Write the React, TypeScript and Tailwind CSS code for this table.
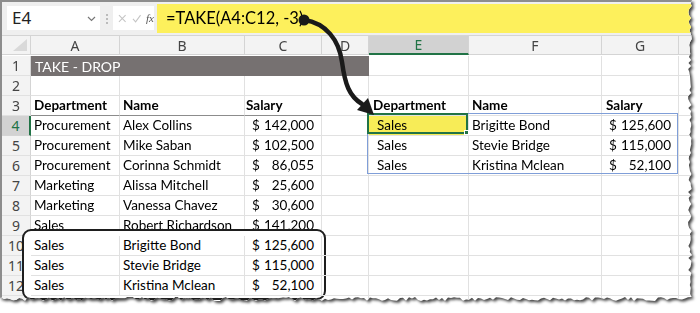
import React from "react";

const COLS = [29, 89, 125, 77, 47, 100, 133, 77];

type Row = {
  a?: string;
  b?: string;
  c?: string;
  e?: string;
  f?: string;
  g?: string;
  bold?: boolean;
};

const rows: Row[] = [
  {},
  {},
  { a: "Department", b: "Name", c: "Salary", e: "Department", f: "Name", g: "Salary", bold: true },
  { a: "Procurement", b: "Alex Collins", c: "142,000", e: "Sales", f: "Brigitte Bond", g: "125,600" },
  { a: "Procurement", b: "Mike Saban", c: "102,500", e: "Sales", f: "Stevie Bridge", g: "115,000" },
  { a: "Procurement", b: "Corinna Schmidt", c: "86,055", e: "Sales", f: "Kristina Mclean", g: "52,100" },
  { a: "Marketing", b: "Alissa Mitchell", c: "25,600" },
  { a: "Marketing", b: "Vanessa Chavez", c: "30,600" },
  { a: "Sales", b: "Robert Richardson", c: "141,200" },
  { a: "Sales", b: "Brigitte Bond", c: "125,600" },
  { a: "Sales", b: "Stevie Bridge", c: "115,000" },
  { a: "Sales", b: "Kristina Mclean", c: "52,100" },
  {},
];

// jagged "torn paper" outline for the screenshot edge
function tornEdge() {
  let s = 11;
  const rand = () => {
    s = (s * 9301 + 49297) % 233280;
    return s / 233280;
  };
  const pts: string[] = ["0px 0px", "692px 0px"];
  for (let y = 3; y <= 297; y += 3) pts.push(`${(688 + rand() * 4).toFixed(1)}px ${y}px`);
  for (let x = 688; x >= 0; x -= 3) pts.push(`${x}px ${(297 + rand() * 4).toFixed(1)}px`);
  pts.push("0px 299px");
  return `polygon(${pts.join(",")})`;
}

const cellFont = { fontFamily: "Lato, 'Open Sans', sans-serif" };

function Money({ v, bold }: { v?: string; bold?: boolean }) {
  if (!v) return null;
  if (bold) return <span className="pl-[1px]">{v}</span>;
  return (
    <span className="flex w-full justify-between pl-[7px] pr-[7px]">
      <span>$</span>
      <span>{v}</span>
    </span>
  );
}

function Sheet() {
  const template = `${COLS.map((c) => c + "px").join(" ")} 1fr`;
  return (
    <div
      className="grid text-[13.5px] text-black"
      style={{ gridTemplateColumns: template, gridAutoRows: "20px", ...cellFont }}
    >
      {/* column header row */}
      <div className="relative h-[19px] border-b border-r border-[#d4d4d4] bg-[#f3f3f3]">
        <div className="absolute bottom-[3px] right-[3px] h-0 w-0 border-b-[12px] border-l-[14px] border-b-[#d9d9d9] border-l-transparent" />
      </div>
      {["A", "B", "C", "D", "E", "F", "G", ""].map((l) => (
        <div
          key={l || "h"}
          className={
            l === "E"
              ? "flex h-[19px] items-center justify-center border-b-2 border-r border-b-[#217346] border-r-[#d4d4d4] bg-[#d2d2d2] text-[14px] text-[#217346]"
              : "flex h-[19px] items-center justify-center border-b border-r border-[#d4d4d4] bg-[#f3f3f3] text-[14px] text-[#444]"
          }
          style={{ fontFamily: "'Noto Sans', sans-serif" }}
        >
          {l}
        </div>
      ))}

      {rows.map((r, i) => {
        const n = i + 1;
        const boxed = n >= 10 && n <= 12;
        const z = boxed ? "relative z-20" : "";
        const cell = `flex items-center overflow-hidden whitespace-nowrap border-b border-r border-[#e1e1e1] ${z}`;
        const hdrCell = r.bold ? "border-b-[#8c8c8c]" : "";
        const spill = n >= 4 && n <= 6;
        return (
          <React.Fragment key={n}>
            <div
              className={
                n === 4
                  ? "flex items-center justify-center border-b border-r-2 border-b-[#d4d4d4] border-r-[#217346] bg-[#d2d2d2] text-[14px] text-[#217346]"
                  : "flex items-center justify-center border-b border-r border-b-[#e1e1e1] border-r-[#d4d4d4] bg-[#f3f3f3] text-[14px] text-[#444]"
              }
              style={{ fontFamily: "'Noto Sans', sans-serif" }}
            >
              {n}
            </div>
            {n === 1 ? (
              <div className="col-span-4 flex items-center bg-[#767171] pl-1 text-[14px] text-white">TAKE - DROP</div>
            ) : (
              <>
                <div className={`${cell} ${hdrCell} pl-[3px] ${r.bold ? "font-bold" : ""}`}>{r.a}</div>
                <div className={`${cell} ${hdrCell} pl-[3px] ${r.bold ? "font-bold" : ""}`}>{r.b}</div>
                <div className={`${cell} ${hdrCell} ${r.bold ? "font-bold" : ""}`}>
                  <Money v={r.c} bold={r.bold} />
                </div>
                <div className={cell} />
              </>
            )}
            <div
              className={`${cell} ${spill ? "pl-[8px]" : "pl-[4px]"} ${r.bold ? "font-bold" : ""} ${
                n === 4 ? "bg-[#f7ec57]" : ""
              }`}
            >
              {r.e}
            </div>
            <div className={`${cell} pl-[3px] ${r.bold ? "font-bold" : ""}`}>{r.f}</div>
            <div className={`${cell} ${r.bold ? "font-bold pl-[3px]" : "pr-[0px]"}`}>
              <Money v={r.g} bold={r.bold} />
            </div>
            <div className={cell} />
          </React.Fragment>
        );
      })}
    </div>
  );
}

function FormulaBar() {
  return (
    <div className="flex h-[34px] items-stretch border-b border-[#d4d4d4] bg-[#efefef] pt-[2px] pb-[2px]">
      <div
        className="ml-[5px] mt-[2px] mb-[3px] flex w-[93px] items-center justify-between bg-white pl-[5px] pr-[4px] text-[17px] text-[#222]"
        style={{ fontFamily: "'Noto Sans', sans-serif" }}
      >
        <span>E4</span>
        <svg width="9" height="6" viewBox="0 0 9 6" className="mt-[2px]">
          <path d="M1 1 L4.5 4.5 L8 1" fill="none" stroke="#777" strokeWidth="1.2" />
        </svg>
      </div>
      <div className="flex w-[13px] flex-col items-center justify-center gap-[2px]">
        <span className="h-[2px] w-[2px] bg-[#bbb]" />
        <span className="h-[2px] w-[2px] bg-[#bbb]" />
        <span className="h-[2px] w-[2px] bg-[#bbb]" />
      </div>
      <div className="mt-[2px] mb-[3px] flex w-[41px] items-center gap-[5px] bg-white pl-[5px]">
        <svg width="9" height="9" viewBox="0 0 9 9">
          <path d="M1 1 L8 8 M8 1 L1 8" stroke="#c4c4c4" strokeWidth="1.1" />
        </svg>
        <svg width="10" height="9" viewBox="0 0 10 9">
          <path d="M1 5 L3.8 8 L9 1" fill="none" stroke="#c4c4c4" strokeWidth="1.1" />
        </svg>
        <span className="text-[11px] italic text-[#555]" style={{ fontFamily: "'Liberation Serif', serif" }}>
          fx
        </span>
      </div>
      <div
        className="ml-[3px] flex flex-1 items-center bg-[#fdf05c] pl-[9px] text-[16.5px] text-black"
        style={cellFont}
      >
        =TAKE(A4:C12, -3)
      </div>
    </div>
  );
}

export default function App() {
  return (
    <div className="relative h-[313px] w-[700px] overflow-hidden bg-white">
      <div className="drop-shadow-[2px_2px_1.5px_rgba(0,0,0,0.75)]">
        <div
          className="relative h-[313px] w-[700px] overflow-hidden border-l-2 border-t-2 border-[#8d8d8d] bg-white"
          style={{ clipPath: tornEdge() }}
        >
          <FormulaBar />
          <Sheet />

          {/* spill range outline and active cell */}
          <div className="pointer-events-none absolute left-[365px] top-[111px] h-[61px] w-[311px] border border-[#7f9ed8]" />
          <div className="pointer-events-none absolute left-[365px] top-[111px] h-[21px] w-[101px] border-2 border-[#217346]">
            <div className="absolute -bottom-[3px] -right-[3px] h-[5px] w-[5px] border border-white bg-[#217346]" />
          </div>

          {/* rounded callout around rows 10-12 */}
          <div className="absolute left-[20px] top-[227px] z-10 h-[71px] w-[304px] rounded-[9px] border-2 border-[#1e1e1e] bg-white" />

          {/* arrow from formula to result */}
          <svg className="pointer-events-none absolute left-0 top-0 z-30" width="700" height="313">
            <circle cx="302" cy="18" r="5.5" fill="#1a1a1a" />
            <path
              d="M302 18 C 324 21, 337 38, 340 60 C 343 82, 347 94, 360 102"
              fill="none"
              stroke="#1a1a1a"
              strokeWidth="4.5"
              strokeLinecap="round"
            />
            <polygon points="372,113 355,108 366,96" fill="#1a1a1a" />
          </svg>
        </div>
      </div>
    </div>
  );
}
